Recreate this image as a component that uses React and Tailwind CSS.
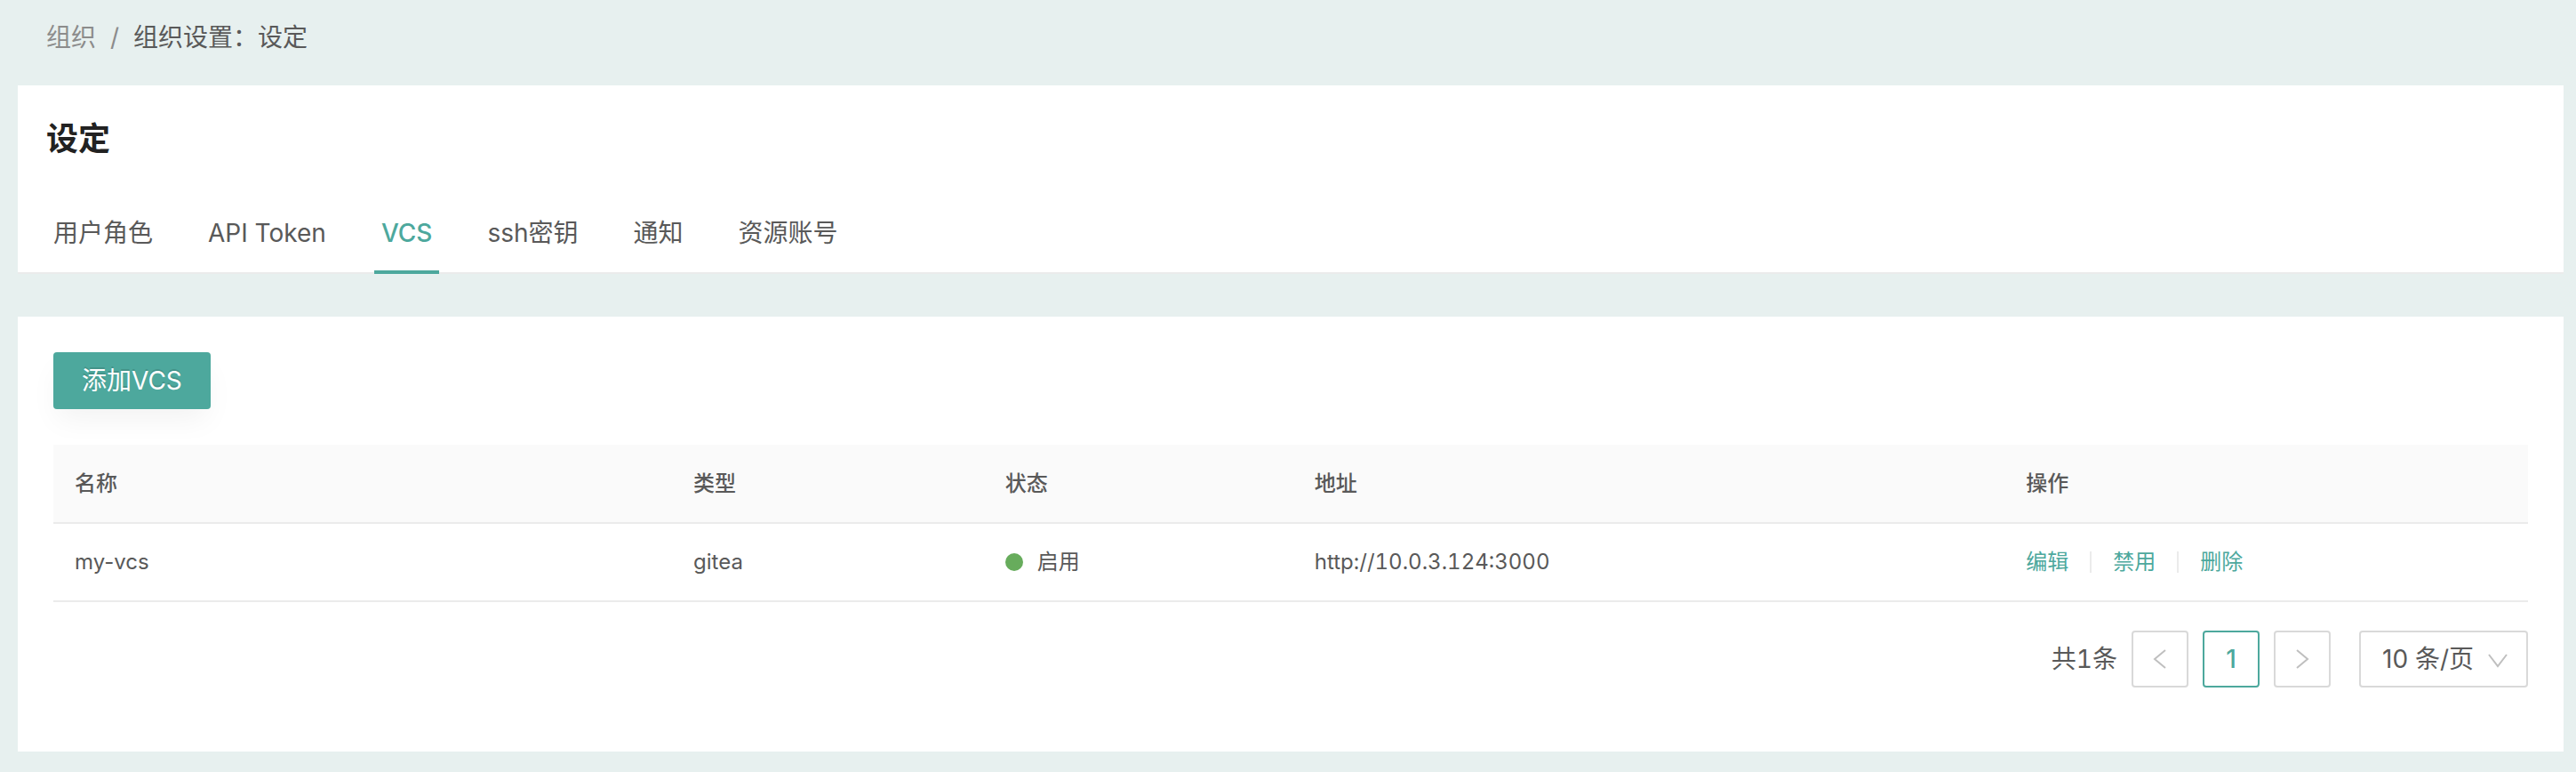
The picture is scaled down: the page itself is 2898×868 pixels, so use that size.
const tabs = ["用户角色", "API Token", "VCS", "ssh密钥", "通知", "资源账号"];

const rows = [{ name: "my-vcs", type: "gitea", status: "启用", url: "http://10.0.3.124:3000" }];

const focusRing = "focus-visible:outline-2 focus-visible:outline-[#4da89d]";

function Chevron({ d, className }) {
  return (
    <svg viewBox="0 0 24 24" className={className} fill="none" stroke="#bfbfbf" strokeWidth="2" aria-hidden="true">
      <path d={d} />
    </svg>
  );
}

function Breadcrumb() {
  return (
    <nav aria-label="面包屑" className="flex items-center gap-4 px-8 pt-5 pb-8 text-[28px] leading-11">
      <a href="#org" className="text-[#8c8c8c]">组织</a>
      <span className="text-[#8c8c8c]">/</span>
      <span>组织设置：设定</span>
    </nav>
  );
}

function Tabs() {
  return (
    <div role="tablist" className="flex gap-[46px] border-b-2 border-[#ebebeb] px-8">
      {tabs.map((tab) => {
        const active = tab === "VCS";
        return (
          <button
            key={tab}
            type="button"
            role="tab"
            aria-selected={active}
            className={
              active
                ? "-mb-0.5 border-b-4 border-[#4da89d] px-2 pt-5 pb-5 font-medium text-[#4da89d]"
                : "-mb-0.5 border-b-4 border-transparent px-2 pt-5 pb-5"
            }
          >
            {tab}
          </button>
        );
      })}
    </div>
  );
}

function VcsTable() {
  return (
    <table className="mt-10 w-full table-fixed border-collapse text-left text-2xl leading-10">
      <colgroup>
        <col className="w-[25%]" />
        <col className="w-[12.6%]" />
        <col className="w-[12.5%]" />
        <col className="w-[28.75%]" />
        <col />
      </colgroup>
      <thead>
        <tr className="h-22 border-b-2 border-[#ebebeb] bg-[#fafafa]">
          {["名称", "类型", "状态", "地址", "操作"].map((h) => (
            <th key={h} scope="col" className="px-6 font-medium">{h}</th>
          ))}
        </tr>
      </thead>
      <tbody>
        {rows.map((row) => (
          <tr key={row.name} className="h-22 border-b-2 border-[#ebebeb]">
            <td className="px-6">{row.name}</td>
            <td className="px-6">{row.type}</td>
            <td className="px-6">
              <span className="flex items-center gap-4">
                <span className="size-5 rounded-full bg-[#67ac5c]" />
                {row.status}
              </span>
            </td>
            <td className="px-6 tabular-nums">{row.url}</td>
            <td className="px-6">
              <div className="flex items-center gap-6 text-[#4da89d]">
                <button type="button" className={focusRing}>编辑</button>
                <span className="h-6 w-0.5 bg-[#ebebeb]" />
                <button type="button" className={focusRing}>禁用</button>
                <span className="h-6 w-0.5 bg-[#ebebeb]" />
                <button type="button" className={focusRing}>删除</button>
              </div>
            </td>
          </tr>
        ))}
      </tbody>
    </table>
  );
}

function Pagination() {
  const box = "flex size-16 items-center justify-center rounded border-2";
  return (
    <nav aria-label="分页" className="mt-8 flex items-center justify-end gap-4">
      <span className="tabular-nums">共1条</span>
      <button type="button" disabled aria-label="上一页" className={box + " border-[#d9d9d9]"}>
        <Chevron className="size-6" d="M18 2 6 12l12 10" />
      </button>
      <button type="button" aria-current="page" className={box + " border-[#4da89d] font-medium text-[#4da89d]"}>1</button>
      <button type="button" disabled aria-label="下一页" className={box + " border-[#d9d9d9]"}>
        <Chevron className="size-6" d="M6 2l12 10L6 22" />
      </button>
      <div className="relative ml-4">
        <select aria-label="每页条数" className="block h-16 w-[190px] appearance-none rounded border-2 border-[#d9d9d9] bg-white pl-6">
          <option>10 条/页</option>
          <option>20 条/页</option>
          <option>50 条/页</option>
        </select>
        <Chevron className="pointer-events-none absolute top-5 right-[22px] size-6" d="M2 7l10 13L22 7" />
      </div>
    </nav>
  );
}

export default function App() {
  return (
    <div
      lang="zh-CN"
      className="min-h-screen bg-[#e7f0ef] pr-3.5 pb-6 pl-5 font-[Inter,'Noto_Sans_CJK_SC',sans-serif] text-[28px] leading-11 text-[#595959]"
    >
      <Breadcrumb />
      <header className="bg-white">
        <h1 className="px-8 pt-9 pb-10 text-4xl leading-12 font-bold text-[#222222]">设定</h1>
        <Tabs />
      </header>
      <main className="mt-12 bg-white px-10 pt-10 pb-18">
        <button
          type="button"
          className="block h-16 rounded bg-[#4da89d] px-8 text-white shadow-[0_16px_32px_-4px_rgba(0,0,0,0.05)] text-shadow-[0_-2px_0_rgba(0,0,0,0.12)]"
        >
          添加VCS
        </button>
        <VcsTable />
        <Pagination />
      </main>
    </div>
  );
}
